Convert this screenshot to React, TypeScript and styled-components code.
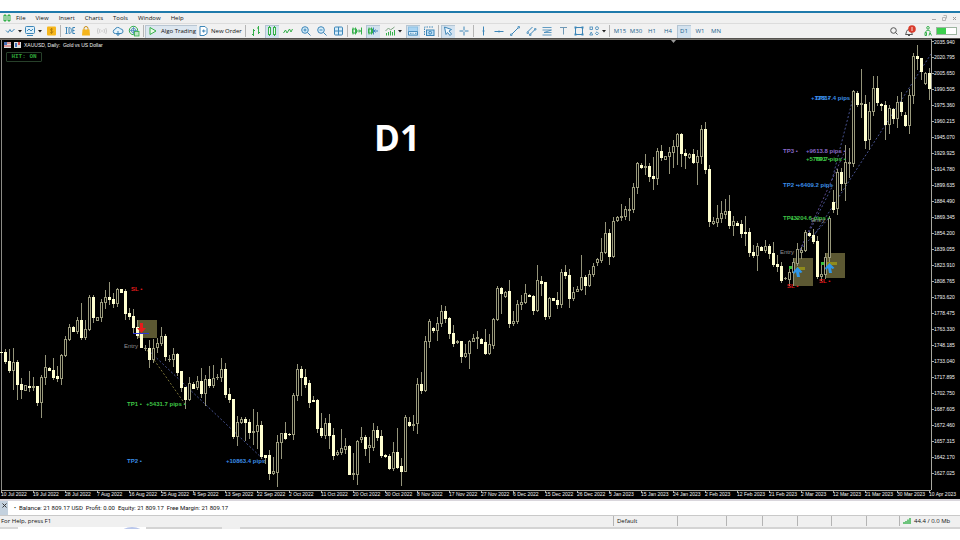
import React from "react";
import styled, { createGlobalStyle } from "styled-components";

const UI = '"Open Sans", "Noto Sans", sans-serif';
const ARIAL = '"Liberation Sans", Arial, sans-serif';

const Global = createGlobalStyle`
  * { box-sizing: border-box; }
  html, body { margin: 0; background: #fff; }
  body { font-family: ${UI}; font-size: 6px; line-height: 8px; color: #111; }
  button { font: inherit; color: inherit; border: 0; padding: 0; background: none; }
  svg { display: block; flex: none; }
`;

const Terminal = styled.div`
  display: flex;
  flex-direction: column;
  padding-top: 11px;
`;

const MenuBar = styled.nav`
  display: flex;
  align-items: center;
  height: 12px;
  padding: 0 2px;
  background: #f0f0f0;
  border-top: 2px solid #1f7aab;
`;

const MenuItem = styled.button`
  padding: 0 5px;
  height: 9px;
  line-height: 9px;
`;

const WindowControls = styled.div`
  display: flex;
  gap: 3px;
  margin-left: auto;
`;

const ControlButton = styled.button`
  width: 7px;
  height: 8px;
`;

const Toolbar = styled.div`
  display: flex;
  align-items: center;
  height: 16px;
  padding: 0 3px;
  background: #f1f1f1;
  border-top: 1px solid #dcdcdc;
  border-bottom: 1px solid #55534f;
`;

const ToolButton = styled.button<{ $pressed?: boolean; $menu?: boolean }>`
  display: flex;
  align-items: center;
  justify-content: center;
  gap: ${(p) => (p.$menu ? 2 : 0)}px;
  width: ${(p) => (p.$menu ? 18 : 14)}px;
  height: 13px;
  margin: 0 1px;
  color: #225f8c;
  background: ${(p) => (p.$pressed ? "#d3e2ef" : "transparent")};
  box-shadow: ${(p) => (p.$pressed ? "inset 1px 1px 0 #b4c5d3" : "none")};
`;

const TextButton = styled.button<{ $pressed?: boolean }>`
  display: flex;
  align-items: center;
  gap: 2px;
  min-width: ${(p) => (p.$pressed ? 52 : 46)}px;
  height: 13px;
  padding-left: ${(p) => (p.$pressed ? 2 : 0)}px;
  white-space: nowrap;
  background: ${(p) => (p.$pressed ? "#dde7f0" : "transparent")};
  box-shadow: ${(p) => (p.$pressed ? "inset 1px 1px 0 #b9c6d2" : "none")};
`;

const Divider = styled.span<{ $wide?: boolean; $bare?: boolean }>`
  width: ${(p) => (p.$bare ? 2 : p.$wide ? 5 : 3)}px;
  height: 12px;
  background: ${(p) =>
    p.$bare ? "none" : "linear-gradient(#b5b5b5, #b5b5b5) center / 1px 100% no-repeat"};
`;

const RightTools = styled.div`
  display: flex;
  align-items: center;
  margin-left: auto;
`;

const ChartWindow = styled.main`
  position: relative;
  display: grid;
  grid-template-columns: minmax(0, 1fr) 29px;
  grid-template-rows: 451px 9px;
  background: #000;
  color: #f4f4f4;
  font-family: ${ARIAL};
  font-size: 5px;
`;

const Plot = styled.svg`
  width: 100%;
  height: 451px;
  border-top: 1px solid #77756f;
`;

const PriceAxis = styled.div`
  display: flex;
  flex-direction: column;
  height: 451px;
  border-left: 1px solid #a8a8a0;
  overflow: hidden;
`;

const Price = styled.span`
  display: flex;
  align-items: center;
  flex: none;
  height: 16px;
  line-height: 16px;
  &:first-child { height: 10px; line-height: 6px; align-items: flex-start; }
  &::before { content: ""; width: 2px; height: 1px; background: #a8a8a0; }
  &:first-child::before { margin-top: 2px; }
`;

const TimeAxis = styled.div`
  display: flex;
  grid-column: 1 / -1;
  height: 9px;
  padding-left: 1px;
  overflow: hidden;
  background: linear-gradient(#a8a8a0, #a8a8a0) 1px 0 / calc(100% - 30px) 1px no-repeat;
`;

const Time = styled.span`
  flex: none;
  width: 32px;
  line-height: 9px;
  white-space: nowrap;
  background: linear-gradient(#a8a8a0, #a8a8a0) 0 0 / 1px 3px no-repeat;
`;

const ChartTitle = styled.div`
  position: absolute;
  top: 2px;
  left: 4px;
  display: flex;
  align-items: center;
  gap: 3px;
  white-space: pre;
`;

const HitBadge = styled.div`
  position: absolute;
  top: 13px;
  left: 6px;
  width: 36px;
  height: 10px;
  border: 1px solid #27402a;
  border-radius: 1px;
  color: #2fa33a;
  font: bold 6px/8px "Liberation Mono", monospace;
  text-align: center;
`;

const Caption = styled.div`
  position: absolute;
  top: 77px;
  left: 374px;
  color: #fff;
  font: bold 35px/44px ${UI};
`;

const AccountBar = styled.section`
  display: flex;
  align-items: center;
  height: 16px;
  border-top: 2px solid #d9d6dc;
  background: #fff;
  font-family: Roboto, sans-serif;
  white-space: pre;
`;

const CloseButton = styled.button`
  width: 8px;
  height: 14px;
  background: #c3d1de;
  margin-right: 6px;
  svg { margin: 0 auto 5px; }
`;

const StatusBar = styled.footer`
  display: flex;
  align-items: flex-start;
  height: 12px;
  background: #f0f0f0;
  border-top: 1px solid #c9c9c9;
`;

const StatusCell = styled.span<{ $w?: number }>`
  display: flex;
  align-items: center;
  gap: 3px;
  flex: ${(p) => (p.$w ? `0 0 ${p.$w}px` : "1 1 0")};
  height: 10px;
  padding-left: ${(p) => (p.$w ? 3 : 1)}px;
  border-left: ${(p) => (p.$w ? "1px solid #b4b4b4" : "0")};
  white-space: nowrap;
`;

const Dock = styled.div`
  display: flex;
  height: 2px;
  overflow: hidden;
`;

const DockPart = styled.span<{ $w?: number; $c?: string }>`
  flex: ${(p) => (p.$w ? `0 0 ${p.$w}px` : "1 1 0")};
  background: ${(p) => p.$c || "transparent"};
`;

const DockArc = styled.span`
  flex: 0 0 22px;
  height: 12px;
  border-radius: 50%;
  background: #b9c6ea;
`;

const B = "#3d86b8";
const G = "#35b04a";

const icons: Record<string, React.ReactNode> = {
  line: <path d="M2 5.500l2 2 2-3 1.500 2.500 3-3" stroke={B} />,
  profiles: (
    <>
      <rect x="1.500" y="1.500" width="9" height="7" rx="1" fill="#dff0fa" stroke={B} />
      <path d="M3 6l2-2 2 2 2-2M3 10.500h6" stroke={B} />
    </>
  ),
  dollar: (
    <>
      <rect x="2" y="1.500" width="9" height="9" rx="1" fill="#f6b61c" />
      <path d="M8 4.500c-1-1-3-.5-2.500.6s2.500.6 2.500 1.700-2 1.400-3 .5M6.500 3v6" stroke="#a87405" strokeWidth=".7" />
    </>
  ),
  ide: <path d="M1.500 2.500h2M2.500 2.500v6M1.500 8.500h2M5 2.500v6h.5c2.500 0 2.500-6 0-6zM11 2.500H8.800v6H11M8.800 5.500h1.700" stroke={B} />,
  bag: (
    <>
      <path d="M4 5V3.500a2 2 0 014 0V5" stroke="#c98d12" />
      <path d="M2.500 4.500h7l.5 6H2z" fill="#f4b51d" />
    </>
  ),
  signal: (
    <>
      <circle cx="6" cy="6" r=".8" fill="#c8c8c8" />
      <path d="M4 4q-1 2 0 4M2.200 3q-1.500 3 0 6M8 4q1 2 0 4M9.800 3q1.500 3 0 6" stroke="#cacaca" />
    </>
  ),
  cloud: (
    <>
      <path d="M3.500 8.500a2 2 0 01-.5-4 3 3 0 015.500-.5 2.200 2.200 0 01.5 4.500z" stroke={B} fill="#e6f4fc" />
      <path d="M6 6v4.500M4.500 9L6 10.500 7.500 9" stroke={B} />
    </>
  ),
  globe: (
    <>
      <circle cx="5.500" cy="5.500" r="4.200" stroke={G} />
      <circle cx="5.500" cy="5.500" r="2.200" stroke={B} strokeWidth=".8" />
      <path d="M1.500 5.500h8M5.500 1.500v8" stroke={B} strokeWidth=".7" />
      <rect x="6.500" y="6.500" width="4.500" height="4.500" fill="#bfe6c6" stroke={G} strokeWidth=".8" />
    </>
  ),
  play: <path d="M3 2.500l6 3.500-6 3.500z" stroke={G} fill="#eafaea" />,
  order: (
    <>
      <path d="M3 1.500h5l2 2v5l-3 2H3z" stroke={B} fill="#fff" />
      <path d="M5 6h3.500M6.700 4.500v3" stroke={B} />
    </>
  ),
  bars: <path d="M3.500 4v7M2 9.500h1.500M3.500 5.500H5M8.500 1v8M7 3h1.500M8.500 7.500H10" stroke={G} />,
  candles: (
    <>
      <path d="M3.500 1v10M8.500 1v10" stroke={G} />
      <rect x="2.500" y="2.500" width="2" height="7" stroke={G} fill="#e9f8ea" />
      <rect x="7.500" y="2.500" width="2" height="7" stroke={G} fill="#e9f8ea" />
    </>
  ),
  zigzag: <path d="M1.500 8l2-3 1.500 3 2.500-4 1.500 3 1.500-3" stroke={G} />,
  zoomIn: (
    <>
      <circle cx="5" cy="5" r="3.300" stroke={B} fill="#d5edfa" />
      <path d="M3.500 5h3M5 3.500v3M7.500 7.500l3 3" stroke={B} />
    </>
  ),
  zoomOut: (
    <>
      <circle cx="5" cy="5" r="3.300" stroke={B} fill="#d5edfa" />
      <path d="M3.500 5h3M7.500 7.500l3 3" stroke={B} />
    </>
  ),
  tile: (
    <>
      <rect x="2.500" y="2" width="8" height="8" rx="1" stroke={B} fill="#d5edfa" />
      <path d="M6.500 2v8M2.500 6h8" stroke={B} />
    </>
  ),
  scroll: (
    <>
      <path d="M2 2.500v7M4.500 2.500v7M10.500 2.500v7" stroke={G} />
      <path d="M1.500 4h4v4h-4zM6 6h3.500M8 4.500L9.500 6 8 7.500" stroke={G} />
    </>
  ),
  shift: (
    <>
      <path d="M2 2.500v7M4.500 2.500v7M1.500 4h4v4h-4z" stroke={G} />
      <path d="M6.500 2.500v7M7 6h4M8.500 4.500L7 6l1.500 1.500" stroke={B} />
    </>
  ),
  indicators: (
    <>
      <path d="M2.500 10.500V8M4.500 10.500V7M6.500 10.500V6M8.500 10.500V7M10.500 10.500V5" stroke={G} />
      <path d="M1.500 6l3-3 2 2 4-3" stroke="#7aa37f" />
    </>
  ),
  oneClick: (
    <>
      <rect x="1.500" y="2" width="9" height="8" stroke="#8dbfe2" fill="#a9d4f2" />
      <path d="M1.500 6.500h9V10h-9zM3 8.300h1.500M5.500 8.300h1M8 8.300h1.500" stroke={B} fill="#dff0fb" strokeWidth=".9" />
    </>
  ),
  camera: (
    <>
      <path d="M1.500 10V2H11" stroke={B} strokeDasharray="1.500 1" />
      <rect x="3.500" y="5" width="7.500" height="5.500" stroke={B} fill="#bfe0f5" />
      <circle cx="7.200" cy="7.700" r="1.400" stroke={B} />
    </>
  ),
  cursor: <path d="M2.500 2l7 2.500-2.500 1.500 2.500 3-1.500 1.500-2.500-3L4 9.500z" stroke={B} fill="#eef7fd" />,
  cross: <path d="M6 1.500v3.500M6 7v3.500M1.500 6H5M7 6h3.500M5.500 6h1" stroke={B} />,
  vline: <path d="M6.500 1.500v9M5.500 6h2" stroke={B} />,
  hline: <path d="M1.500 6.500h9M6 5.500v2" stroke={B} />,
  trend: (
    <>
      <path d="M2.500 9.500l7-7" stroke={B} />
      <path d="M1.500 9h1.500v1.500H1.500zM9 1.500h1.500V3H9z" stroke={B} fill="#fff" strokeWidth=".8" />
    </>
  ),
  channel: (
    <>
      <path d="M2.500 7l5-5M5 9.500l5-5" stroke={B} />
      <path d="M2 7h1.500v1.500H2zM4.500 9H6v1.500H4.500zM9.500 3.500H11V5H9.500z" stroke={B} strokeWidth=".7" />
    </>
  ),
  fibo: <path d="M1.500 2.500h9M1.500 5h9M3 7.500h7.500M1.500 10h9M10.500 5L3 7.500" stroke={B} strokeWidth=".8" />,
  text: <path d="M3 2.500h7M6.500 2.500V9.500" stroke="#6f98b5" />,
  rect: (
    <>
      <rect x="2.500" y="2.500" width="7" height="7" stroke={B} />
      <path d="M1.500 1.500h2v2h-2zM8.500 1.500h2v2h-2zM1.500 8.500h2v2h-2zM8.500 8.500h2v2h-2z" fill={B} />
    </>
  ),
  shapes: (
    <>
      <rect x="2" y="2" width="2.500" height="2.500" stroke={B} strokeWidth=".8" />
      <circle cx="9" cy="3.200" r="1.500" stroke={B} strokeWidth=".8" />
      <path d="M3.200 7l1.500 3h-3zM9 6.800l1.600 1.600L9 10 7.400 8.400z" stroke={B} strokeWidth=".8" />
    </>
  ),
  search: (
    <>
      <circle cx="5.500" cy="5.500" r="2.800" stroke="#555" />
      <path d="M7.500 7.500l2 2" stroke="#555" />
    </>
  ),
  bell: (
    <>
      <path d="M1.500 9.500c1-1 .5-5 3.500-5s2.500 4 3.500 5zM4 10.500h2" stroke="#555" />
      <circle cx="8" cy="4" r="3.800" fill="#d93c2c" />
      <path d="M8 2v4" stroke="#fff" strokeWidth=".8" />
    </>
  ),
  account: (
    <>
      <circle cx="6" cy="2.800" r="1.300" stroke={G} />
      <path d="M3.500 6.500q2.500-3 5 0M3 10.500v-3h1.500v3zM7 10.500l1-3 1.500 3" stroke={G} />
    </>
  ),
};

const Icon = ({ name }: { name: string }) => (
  <svg width="12" height="12" viewBox="0 0 12 12" fill="none" aria-hidden="true">
    {icons[name]}
  </svg>
);

const Caret = () => (
  <svg width="4" height="3" viewBox="0 0 4 3" aria-hidden="true">
    <path d="M0 0h4L2 2.500z" fill="#222" />
  </svg>
);

type ToolProps = { name: string; label: string; pressed?: boolean; menu?: boolean };
const Tool = ({ name, label, pressed, menu }: ToolProps) => (
  <ToolButton aria-label={label} aria-pressed={pressed} $pressed={pressed} $menu={menu}>
    <Icon name={name} />
    {menu && <Caret />}
  </ToolButton>
);

// One candle every four pixels: "body top, body bottom, high, low", with "f" for a filled (falling) body.
const CANDLES = `
352 352 350 354 f|352 361 349 363 f|361 370 349 372 f|362 370 348 389|362 384 360 399 f|384 389 378 398 f|385 390 385 390|386 387 371 391 f|386 387 377 390|386 402 386 405 f
377 402 375 417|367 377 355 384|368 370 367 370 f|370 377 358 379 f|376 378 366 381 f|355 378 354 384|339 355 336 356|327 339 324 340|327 331 326 331 f|320 331 317 333
320 337 303 339 f|329 337 320 339|297 329 295 330|297 317 295 322 f|317 320 317 320|302 317 299 321|297 302 290 308|297 299 282 304 f|299 303 293 307 f|289 303 288 306
289 292 289 292 f|291 313 289 319 f|313 316 308 319 f|316 327 309 332 f|327 335 320 338 f|334 347 334 347 f|348 348 345 350|348 359 340 367 f|348 359 339 362|343 347 338 352
336 343 327 345|336 356 334 360 f|359 359 355 361|354 359 348 366|354 372 353 375 f|371 387 371 391 f|387 399 387 408 f|383 399 377 400|384 388 382 388 f|381 387 376 389
381 393 368 397 f|379 393 375 405|379 385 366 387 f|378 385 365 387|377 377 374 379|369 377 358 381|369 394 363 397 f|394 399 388 402 f|399 436 399 438 f|422 436 416 445
419 422 417 423|419 422 417 440 f|422 432 419 438 f|431 432 409 444|425 431 412 448|425 456 421 458 f|455 457 455 463 f|455 473 450 479 f|471 473 457 474|442 472 435 486
433 442 433 458|433 438 422 439 f|434 434 433 435 f|395 434 393 439|369 395 364 400|369 377 366 395 f|377 384 369 387 f|383 402 380 407 f|400 401 396 401 f|400 428 399 432 f
428 435 413 437 f|423 435 418 438|423 435 414 448 f|435 455 428 459 f|452 454 450 455|448 452 429 454|446 449 438 453|446 474 445 474 f|473 474 453 479|441 474 440 484
437 439 427 442|437 448 435 455 f|445 447 437 462|430 447 423 450|430 437 426 440 f|436 455 430 457 f|455 456 454 457 f|456 468 454 469 f|452 468 442 470|452 467 428 468 f
466 471 458 485 f|417 471 415 471|422 425 417 426 f|424 425 415 430|384 423 378 433|384 390 372 393 f|341 390 336 391|321 341 319 347|328 330 327 332 f|323 330 317 340
311 323 305 326|311 318 306 322 f|318 333 317 338 f|333 343 325 346 f|341 342 340 343|341 356 341 362 f|353 356 344 357|341 353 340 368|338 341 334 341|337 338 331 348
339 343 338 343 f|342 353 329 354 f|344 353 334 354|319 345 318 348|288 319 286 320|288 293 287 313 f|292 296 291 297|291 323 280 327 f|321 323 311 325|304 321 300 323
302 304 295 309|293 302 284 303|295 296 294 296 f|296 310 295 314 f|280 310 265 311|281 283 276 295 f|282 316 282 319 f|298 316 297 318|298 300 298 300 f|300 304 292 308 f
272 304 269 307|272 275 265 278 f|275 298 269 307 f|292 298 287 300|289 291 286 291|277 289 255 290|277 285 275 294 f|274 285 270 286|266 274 263 276|259 262 258 265
252 260 238 262|233 252 222 253|233 256 229 264 f|221 256 217 257|217 220 216 221|216 217 204 220|209 216 206 219|209 210 198 220|187 209 183 212|163 187 162 193
165 167 163 168 f|166 167 154 174|166 176 163 181 f|176 178 157 189 f|151 178 148 184|151 157 145 160 f|156 159 156 159|152 156 147 173|146 152 140 167|134 146 133 164
134 153 133 166 f|153 155 149 168 f|154 157 153 158|154 162 149 163 f|156 162 150 184|129 156 125 163|129 169 122 173 f|169 221 165 226 f|221 223 217 224|218 222 205 226
213 218 201 222|211 214 199 218|211 225 195 228 f|221 225 216 235|223 225 221 225 f|224 233 220 237 f|232 233 216 245 f|232 252 228 256 f|252 255 245 257 f|246 255 243 270
247 250 246 250 f|246 250 240 252|246 253 244 258 f|253 264 242 266 f|264 266 255 271 f|266 280 262 282 f|278 278 277 279|272 279 268 285|262 272 258 285|249 263 243 265
250 252 247 258|232 250 230 251|233 235 232 236 f|235 241 229 243 f|241 276 236 278 f|274 276 263 280|257 274 253 278|218 257 216 262|202 209 190 212 f|172 208 169 214
172 183 168 190 f|162 183 145 200|162 163 148 177|91 163 90 166|93 104 91 106 f|103 104 69 117|104 140 95 148 f|111 139 102 149|88 111 76 115|88 102 76 105 f
104 105 103 110 f|105 124 101 139 f|108 124 105 133|109 118 108 123 f|102 118 96 127|102 111 92 115 f|115 125 112 126 f|95 125 89 133|56 95 53 103|56 58 45 69 f
58 71 58 79 f|73 83 72 84|73 88 68 99 f`
  .trim()
  .split(/[|\n]/)
  .map((c) => {
    const [top, bottom, high, low, kind] = c.split(" ");
    return { top: +top, bottom: +bottom, high: +high, low: +low, filled: kind === "f" };
  });

const Candles = () => (
  <g shapeRendering="crispEdges">
    {CANDLES.map((c, i) => {
      const x = i * 4 + 1;
      const h = c.bottom - c.top + 1;
      const hollow = !c.filled && h > 2;
      return (
        <g key={i}>
          <rect x={x} y={c.high} width="1" height={c.low - c.high + 1} fill="#94947a" />
          {hollow ? (
            <rect x={x - 0.5} y={c.top + 0.5} width="2" height={h - 1} fill="#000" stroke="#9a9a7c" />
          ) : (
            <rect x={x - 1} y={c.top} width="3" height={h} fill={c.filled ? "#ffffd0" : "#9a9a7c"} />
          )}
        </g>
      );
    })}
  </g>
);

const RED = "#e81c1c";
const BLUE = "#3b8ee6";
const GREEN = "#3fc546";
const VIOLET = "#8868c8";
const GREY = "#929292";

type Note = [number, number, string, string];
const NOTES: Note[] = [
  [131, 291, "SL •", RED],
  [127, 406, "TP1 •", GREEN],
  [146, 406, "+5431.7 pips •", GREEN],
  [127, 463, "TP2 •", BLUE],
  [226, 463, "+10863.4 pips", BLUE],
  [811, 100, "+12817.4 pips", BLUE],
  [815, 100, "TP2 •", BLUE],
  [783, 153, "TP3 •", VIOLET],
  [806, 153, "+9613.8 pips •", VIOLET],
  [806, 161, "+5769.7 pips •", GREEN],
  [815, 161, "TP1 •", GREEN],
  [783, 187, "TP2 •", BLUE],
  [797, 187, "+6409.2 pips", BLUE],
  [783, 220, "TP1 •", GREEN],
  [790, 220, "+3204.6 pips •", GREEN],
  [787, 288, "SL •", RED],
  [819, 283, "SL •", RED],
];
const ENTRIES = [[124, 348], [780, 254], [811, 222]];

const TRADE_LINES = [
  [145, 347, 185, 404, "#8c8440"],
  [145, 347, 265, 461, "#5360a8"],
  [800, 250, 829, 218, "#5360a8"],
  [800, 250, 833, 185, "#5360a8"],
  [800, 250, 845, 151, "#6a58a8"],
  [832, 180, 853, 98, "#5360a8"],
  [813, 237, 931, 54, "#5360a8"],
] as const;

const ChartPlot = () => (
  <Plot role="img" aria-label="XAUUSD daily candlestick chart">
    <g transform="translate(0 -40)">
      <path d="M1.500 40v450" stroke="#8b8b86" />
      <path d="M671 40h5l-2.500 3z" fill="#999" />
      <g fill="#5c5832">
        <rect x="138" y="320" width="19" height="18" />
        <rect x="793" y="258" width="20" height="28" />
        <rect x="825" y="253" width="20" height="25" />
      </g>
      <g strokeDasharray="2 2" strokeWidth="1" opacity=".85">
        {TRADE_LINES.map(([x1, y1, x2, y2, c], i) => (
          <line key={i} x1={x1} y1={y1} x2={x2} y2={y2} stroke={c} />
        ))}
      </g>
      <Candles />
      <path d="M133 333.500h16" stroke="#2c36d8" />
      <path d="M140 323h3v5h3l-4.500 5-4.500-5h3z" fill={RED} />
      <path d="M797 267h8v3h-8zM827 262h10v3h-10z" fill="#8f8b1c" />
      <path d="M789 266h3v3h-3zM821 262h3v3h-3z" fill="#35c03a" />
      <path d="M797.500 267l5 5-2 1-1.500-1 1 5h-3l-1-5-2 2-1-2zM829.500 263l5 5-2 1-1.500-1 1 5h-3l-1-5-2 2-1-2z" fill="#2e96e8" />
      <g fontFamily={ARIAL} fontSize="6" fontWeight="bold">
        {NOTES.map(([x, y, text, color], i) => (
          <text key={i} x={x} y={y} fill={color}>{text}</text>
        ))}
      </g>
      <g fontFamily={ARIAL} fontSize="6" fill={GREY}>
        {ENTRIES.map(([x, y]) => (
          <text key={x} x={x} y={y}>Entry</text>
        ))}
      </g>
    </g>
  </Plot>
);

const PRICES = Array.from({ length: 28 }, (_, i) => (2035.94 - i * 15.145).toFixed(3));
const DATES = [
  "10 Jul 2022", "19 Jul 2022", "28 Jul 2022", "7 Aug 2022", "16 Aug 2022", "25 Aug 2022",
  "4 Sep 2022", "13 Sep 2022", "22 Sep 2022", "2 Oct 2022", "11 Oct 2022", "20 Oct 2022",
  "30 Oct 2022", "8 Nov 2022", "17 Nov 2022", "27 Nov 2022", "6 Dec 2022", "15 Dec 2022",
  "26 Dec 2022", "5 Jan 2023", "15 Jan 2023", "24 Jan 2023", "2 Feb 2023", "12 Feb 2023",
  "21 Feb 2023", "2 Mar 2023", "12 Mar 2023", "21 Mar 2023", "30 Mar 2023", "10 Apr 2023",
];

export default function App() {
  return (
    <>
      <Global />
      <Terminal>
        <MenuBar>
          <svg width="9" height="8" viewBox="0 0 9 8" fill="none" stroke={G} aria-hidden="true">
            <path d="M3 0v8M7 0v8" />
            <rect x="2" y="1.500" width="2" height="5" fill="#f0f0f0" />
            <rect x="6" y="1.500" width="2" height="5" fill="#f0f0f0" />
          </svg>
          {["File", "View", "Insert", "Charts", "Tools", "Window", "Help"].map((m) => (
            <MenuItem key={m}>{m}</MenuItem>
          ))}
          <WindowControls>
            <ControlButton aria-label="Minimize">
              <svg width="7" height="8" viewBox="0 0 7 8"><path d="M1 5.500h4" stroke="#aaa" /></svg>
            </ControlButton>
            <ControlButton aria-label="Restore">
              <svg width="7" height="8" viewBox="0 0 7 8" fill="none" stroke="#b5b5b5"><path d="M1.500 3.500h3v3h-3zM2.500 1.500h3v3" /></svg>
            </ControlButton>
            <ControlButton aria-label="Close">
              <svg width="7" height="8" viewBox="0 0 7 8"><path d="M2 3l3 3M5 3L2 6" stroke="#999" /></svg>
            </ControlButton>
          </WindowControls>
        </MenuBar>

        <Toolbar>
          <Tool name="line" label="New chart" menu />
          <Tool name="profiles" label="Profiles" menu />
          <Tool name="dollar" label="Market watch" />
          <Divider />
          <Tool name="ide" label="IDE" />
          <Tool name="bag" label="Market" />
          <Tool name="signal" label="Signals" />
          <Tool name="cloud" label="VPS" />
          <Tool name="globe" label="Community" />
          <Divider />
          <TextButton $pressed aria-pressed>
            <Icon name="play" />
            Algo Trading
          </TextButton>
          <TextButton>
            <Icon name="order" />
            New Order
          </TextButton>
          <Divider $wide />
          <Tool name="bars" label="Bar chart" />
          <Tool name="candles" label="Candlesticks" pressed />
          <Tool name="zigzag" label="Line chart" />
          <Divider $bare />
          <Tool name="zoomIn" label="Zoom in" />
          <Tool name="zoomOut" label="Zoom out" />
          <Tool name="tile" label="Tile windows" />
          <Divider />
          <Tool name="scroll" label="Auto scroll" />
          <Tool name="shift" label="Chart shift" pressed />
          <Divider $bare />
          <Tool name="indicators" label="Indicators" menu />
          <Divider $bare />
          <Tool name="oneClick" label="Status view" pressed />
          <Tool name="camera" label="Screenshot" />
          <Divider />
          <Tool name="cursor" label="Cursor" pressed />
          <Tool name="cross" label="Crosshair" />
          <Divider />
          <Tool name="vline" label="Vertical line" />
          <Tool name="hline" label="Horizontal line" />
          <Tool name="trend" label="Trendline" />
          <Tool name="channel" label="Channel" />
          <Tool name="fibo" label="Fibonacci" />
          <Tool name="text" label="Text" />
          <Tool name="rect" label="Rectangle" />
          <Tool name="shapes" label="Shapes" menu />
          <Divider $wide />
          {["M15", "M30", "H1", "H4", "D1", "W1", "MN"].map((t) => (
            <ToolButton key={t} $pressed={t === "D1"}>{t}</ToolButton>
          ))}
          <RightTools>
            <Tool name="search" label="Search" />
            <Tool name="bell" label="Notifications" />
            <Divider $bare />
            <Tool name="account" label="Account" />
            <svg width="21" height="8" viewBox="0 0 21 8" aria-hidden="true">
              <rect x=".5" y=".5" width="20" height="7" fill="#fff" stroke="#9db5a0" />
              <rect x="1" y="1" width="9" height="6" fill="#3ccf4e" />
            </svg>
          </RightTools>
        </Toolbar>

        <ChartWindow>
          <ChartPlot />
          <PriceAxis>
            {PRICES.map((p) => (
              <Price key={p}>{p}</Price>
            ))}
          </PriceAxis>
          <TimeAxis>
            {DATES.map((d) => (
              <Time key={d}>{d}</Time>
            ))}
          </TimeAxis>
          <ChartTitle>
            <svg width="17" height="6" viewBox="0 0 17 6" aria-hidden="true">
              <path d="M0 0h7v6H0z" fill="#ddd" />
              <path d="M0 0h3v3H0z" fill="#4770b8" />
              <path d="M3 1h4M0 4h7" stroke="#d45050" />
              <path d="M10 0h7v6h-7z" fill="#ddd" />
              <path d="M11 1h2v4h-2z" fill="#4770b8" />
              <path d="M14 0h2v3h-2z" fill="#d45050" />
            </svg>
            {"XAUUSD, Daily:  Gold vs US Dollar"}
          </ChartTitle>
          <HitBadge>HIT: ON</HitBadge>
          <Caption>D1</Caption>
        </ChartWindow>

        <AccountBar>
          <CloseButton aria-label="Close toolbox">
            <svg width="5" height="5" viewBox="0 0 5 5"><path d="M.5 .5l4 4M4.500 .5l-4 4" stroke="#333" /></svg>
          </CloseButton>
          {"•  Balance: 21 809.17 USD  Profit: 0.00  Equity: 21 809.17  Free Margin: 21 809.17"}
        </AccountBar>
        <StatusBar>
          <StatusCell>For Help, press F1</StatusCell>
          <StatusCell $w={64}>Default</StatusCell>
          <StatusCell $w={49} />
          <StatusCell $w={36} />
          <StatusCell $w={35} />
          <StatusCell $w={34} />
          <StatusCell $w={35} />
          <StatusCell $w={33} />
          <StatusCell $w={61}>
            <svg width="8" height="6" viewBox="0 0 8 6" aria-hidden="true">
              <path d="M1 6V4M3 6V3M5 6V1.500M7 6V0" stroke={G} strokeWidth="1.400" />
            </svg>
            44.4 / 0.0 Mb
          </StatusCell>
        </StatusBar>
        <Dock>
          <DockPart $w={18} $c="#d8d8d8" />
          <DockPart $w={103} />
          <DockArc />
          <DockPart $w={3} />
          <DockPart $w={76} $c="#d4d4d4" />
          <DockPart $w={18} $c="#efefef" />
          <DockPart $c="#d4d4d4" />
        </Dock>
      </Terminal>
    </>
  );
}
